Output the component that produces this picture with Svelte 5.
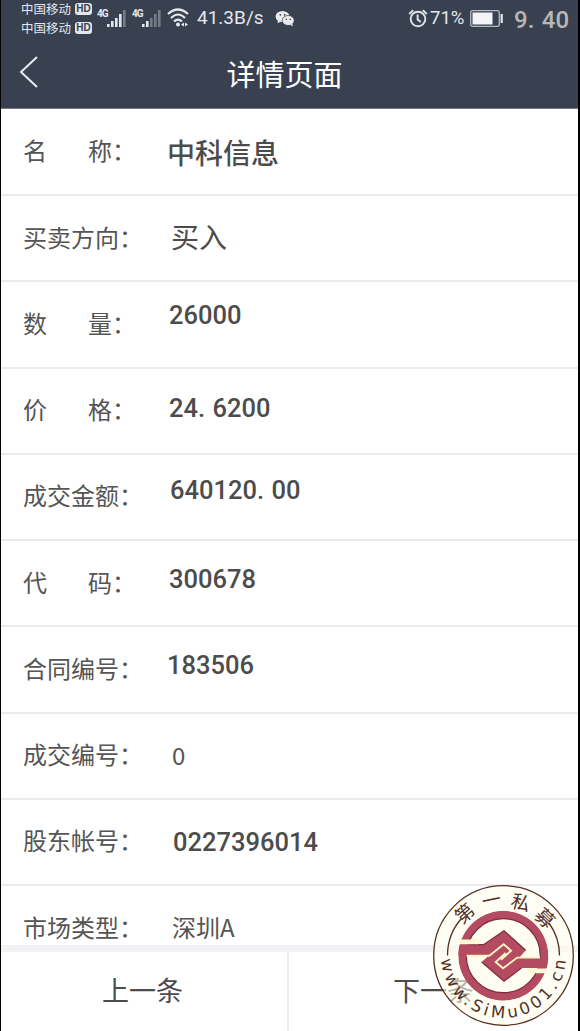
<script lang="ts">
    type Row = {
        label: string;
        value: string;
        kind: string;
        indent: number;
        lift: number;
    };

    // indent and lift place each value inside its own row
    let rows: Row[] = [
        { label: '名称', value: '中科信息', kind: 'name', indent: 166, lift: 0 },
        { label: '买卖方向', value: '买入', kind: 'name light', indent: 170, lift: 2 },
        { label: '数量', value: '26000', kind: 'number', indent: 168, lift: 9 },
        { label: '价格', value: '24.6200', kind: 'number', indent: 168, lift: 3 },
        { label: '成交金额', value: '640120.00', kind: 'number', indent: 169, lift: 7 },
        { label: '代码', value: '300678', kind: 'number', indent: 168, lift: 4 },
        { label: '合同编号', value: '183506', kind: 'number', indent: 166, lift: 4 },
        { label: '成交编号', value: '0', kind: 'plain', indent: 171, lift: 1 },
        { label: '股东帐号', value: '0227396014', kind: 'number', indent: 172, lift: 0 },
        { label: '市场类型', value: '深圳A', kind: 'plain', indent: 171, lift: 2 },
    ];

    let carriers: string[] = ['中国移动', '中国移动'];

    let signals: number[] = [4, 2];
</script>

<div class="screen">
    <header>
        <div class="status">
            <div class="carriers">
                {#each carriers as carrier}
                    <div class="carrier">{carrier}<b>HD</b></div>
                {/each}
            </div>
            {#each signals as level}
                <div class="signal">
                    <span>4G</span>
                    <svg width="20" height="18" viewBox="0 0 20 18">
                        {#each [3, 6, 9, 13, 17] as h, i}
                            <rect
                                x={i * 4}
                                y={18 - h}
                                width="2.6"
                                height={h}
                                fill="#e4e7ee"
                                opacity={i < level ? 1 : 0.35}
                            />
                        {/each}
                    </svg>
                </div>
            {/each}
            <svg class="wifi" width="22" height="19" viewBox="0 0 22 19">
                <g fill="none" stroke="#e4e7ee" stroke-width="2.2">
                    <path d="M1 6Q11-3 21 6" />
                    <path d="M4 10Q11 3 18 10" />
                    <path d="M7 13.5Q11 9.500 15 13.500" />
                </g>
                <circle cx="11" cy="16.500" r="2" fill="#e4e7ee" />
                <path d="M14 16.500l3-2v4zM21 16.500l-3-2v4z" fill="#e4e7ee" />
            </svg>
            <span class="speed">41.3B/s</span>
            <svg class="chat" width="20" height="17" viewBox="0 0 20 17">
                <ellipse cx="7.500" cy="6.500" rx="6.900" ry="5.600" fill="#e8eaee" />
                <path d="M3 9.500l-.5 3.700 3.500-1.700z" fill="#e8eaee" />
                <ellipse cx="13.200" cy="10.500" rx="6" ry="5" fill="#e8eaee" stroke="#394150" stroke-width=".7" />
                <path d="M15 14.500l2.800 2-.5-3z" fill="#e8eaee" />
                <g fill="#394150">
                    <circle cx="5.300" cy="4.800" r=".9" />
                    <circle cx="9.700" cy="4.800" r=".9" />
                    <circle cx="11.300" cy="9.200" r=".8" />
                    <circle cx="15.200" cy="9.200" r=".8" />
                </g>
            </svg>
            <svg class="alarm" width="20" height="19" viewBox="0 0 20 19">
                <g fill="none" stroke="#e0e3ea" stroke-width="1.900">
                    <circle cx="10" cy="10" r="7.300" />
                    <path d="M1.200 5L5.200 1.200M18.800 5l-4-3.800M9.600 5.500v5l3.200 2.600" />
                </g>
            </svg>
            <span class="percent">71%</span>
            <svg class="battery" width="34" height="17" viewBox="0 0 34 17">
                <rect x=".7" y=".7" width="28.600" height="15.600" rx="2" fill="none" stroke="#b4b9c4" stroke-width="1.300" />
                <rect x="2.500" y="2.500" width="20" height="12" fill="#f4f4f6" />
                <rect x="30.600" y="4" width="2.200" height="9" fill="#e4e7ee" />
            </svg>
            <span class="time">9<i>.</i>40</span>
        </div>
        <div class="titlebar">
            <svg class="back" width="20" height="32" viewBox="0 0 20 32">
                <path d="M18 1L2 16l16 15" fill="none" stroke="#e8eaf0" stroke-width="2" />
            </svg>
            <h1>详情页面</h1>
        </div>
    </header>

    <main>
        {#each rows as row}
            <div class="row">
                <div class="label" class:short={row.label.length === 2}>
                    {#if row.label.length === 2}
                        <span>{row.label[0]}</span><span>{row.label[1]}：</span>
                    {:else}
                        {row.label}：
                    {/if}
                </div>
                <div
                    class="value {row.kind}"
                    style={`padding-left: ${row.indent - 150}px; padding-bottom: ${row.lift * 2}px`}
                >
                    {#each row.value.split('.') as part, i}{#if i > 0}<i>.</i>{/if}{part}{/each}
                </div>
            </div>
        {/each}
    </main>

    <nav>
        <button type="button">上一条</button>
        <button type="button">下一条</button>
    </nav>

    <svg class="seal" width="142" height="142" viewBox="0 0 142 142">
        <defs>
            <path id="ring-bottom" d="M8 70.500a62.500 62.500 0 0 0 125 0" />
            <clipPath id="disc">
                <circle cx="70.300" cy="70.700" r="45" />
            </clipPath>
            <clipPath id="hole">
                <circle cx="70.300" cy="70.700" r="36.500" />
            </clipPath>
        </defs>
        <circle cx="70.500" cy="70.500" r="70" fill="#fffdee" opacity=".6" />
        <circle cx="70.500" cy="70.500" r="69.800" fill="none" stroke="#54301f" stroke-width="1.300" />
        <path
            d="M14.500 70.500A56 56 0 0 1 28 34M116 38A56 56 0 0 1 126.500 70.500"
            fill="none"
            stroke="#54301f"
            stroke-width="1.300"
        />
        <g clip-path="url(#disc)">
            <circle cx="70.300" cy="70.700" r="45" fill="#b44b61" />
            <circle cx="70.300" cy="70.700" r="37" fill="#fffdf0" stroke="#7c2c3f" stroke-width="1.200" />
            <path
                d="M25 59.700H50.500L71 45.700 92.700 65.300 86 73H116V83H88.500L71 96.300 48.700 77 56 70.500H25z"
                fill="#b44b61"
            />
            <g clip-path="url(#hole)">
                <path
                    d="M34 59.700H50.500L71 45.700 92.700 65.300M88.500 83L71 96.300 48.700 77"
                    fill="none"
                    stroke="#7c2c3f"
                    stroke-width="1.200"
                />
            </g>
            <path d="M24 54.500H46V59.200H24zM117 83.500H94V88.200H117z" fill="#fff8d5" />
            <path
                d="M33.500 70.800H56.300L70.700 59.300 78 65.700 68 74.700M107 72.600H84.300L70 83.300 62.700 77 72.700 68"
                fill="none"
                stroke="#fff3c4"
                stroke-width="1.900"
            />
        </g>
        <g class="seal-cn">
            <text y="6.500" transform="translate(32 28.500) rotate(-41)">第</text>
            <text y="6.500" transform="translate(58.500 15.500) rotate(-12)">一</text>
            <text y="6.500" transform="translate(87.500 18) rotate(15)">私</text>
            <text y="6.500" transform="translate(111.500 33.500) rotate(44)">募</text>
        </g>
        <text class="seal-url">
            <textPath href="#ring-bottom" startOffset="4" textLength="187">www.SiMu001.cn</textPath>
        </text>
    </svg>
</div>

<style>
    :global(body) {
        margin: 0;
        background: #000;
    }

    .screen {
        position: relative;
        box-sizing: border-box;
        width: 580px;
        height: 1031px;
        padding: 0 2px 0 1px;
        display: flex;
        flex-direction: column;
        overflow: hidden;
        background: #000;
        color: #4c4c4c;
        font-family: 'Noto Sans CJK SC', sans-serif;
    }

    header {
        height: 109px;
        box-sizing: border-box;
        background: #394150;
        border-bottom: 1px solid #777986;
        color: #e4e7ee;
    }

    .status {
        display: flex;
        align-items: center;
        height: 36px;
        padding-left: 20px;
        white-space: nowrap;
    }

    .carriers {
        width: 76px;
    }

    .carrier {
        display: flex;
        align-items: center;
        gap: 4px;
        height: 19px;
        font-size: 12.5px;
        line-height: 19px;
    }

    .carrier b {
        width: 17px;
        height: 12px;
        border-radius: 3px;
        background: #e4e7ee;
        color: #394150;
        font: bold 10px/12px 'Liberation Sans', sans-serif;
        text-align: center;
    }

    .signal {
        display: flex;
        align-items: flex-start;
        width: 35px;
    }

    .signal span {
        width: 10px;
        font: bold 10px/10px Roboto, sans-serif;
        letter-spacing: -1px;
    }

    .wifi {
        margin-top: -2px;
    }

    .speed {
        width: 78px;
        margin-left: 8px;
        font: 19px/36px Roboto, sans-serif;
    }

    .chat {
        margin-right: 113px;
    }

    .percent {
        width: 39px;
        margin-left: 2px;
        font: 18.5px/36px Roboto, sans-serif;
    }

    .alarm,
    .chat,
    .battery,
    .wifi {
        flex: none;
    }

    .battery {
        margin-left: 1px;
    }

    .time {
        margin: 3px 0 0 10px;
        color: #b7b7b9;
        font: 500 24px/36px Roboto, sans-serif;
    }

    i {
        font-style: normal;
        letter-spacing: 7.5px;
    }

    .titlebar {
        display: grid;
        grid-template-columns: 50px 1fr 60px;
        align-items: center;
        height: 72px;
    }

    .back {
        margin-left: 18px;
    }

    h1 {
        margin: 2px 0 0;
        font-size: 29px;
        font-weight: 400;
        line-height: 40px;
        text-align: center;
        color: #fff;
    }

    main {
        flex: 1;
        overflow: hidden;
        background: #fff;
    }

    .row {
        display: flex;
        box-sizing: border-box;
        height: 86.25px;
        border-bottom: 2px solid #ebebed;
    }

    .row:first-child {
        height: 87px;
    }

    .label {
        display: flex;
        align-items: center;
        flex: none;
        box-sizing: border-box;
        width: 150px;
        padding: 0 0 4px 22px;
        color: #555;
        font-size: 24px;
        white-space: nowrap;
    }

    .short span:first-child {
        width: 65px;
    }

    .value {
        display: flex;
        align-items: center;
        white-space: nowrap;
    }

    .name {
        font-size: 28px;
        font-weight: 500;
    }

    .light {
        font-weight: 400;
    }

    .number {
        font: 500 25.5px Roboto, sans-serif;
    }

    .plain {
        color: #555;
        font-size: 24px;
    }

    nav {
        display: flex;
        flex: none;
        height: 86px;
        box-sizing: border-box;
        border-top: 7px solid #f2f2f5;
        background: #fff;
    }

    button {
        box-sizing: border-box;
        width: 289px;
        padding: 0 0 4px;
        border: none;
        background: none;
        color: #4c4c4c;
        font: 27px/40px 'Noto Sans CJK SC', sans-serif;
        cursor: pointer;
    }

    button:first-child {
        width: 288px;
        padding-right: 3px;
        border-right: 2px solid #ebebed;
    }

    .seal {
        position: absolute;
        left: 433px;
        top: 884.5px;
    }

    .seal-cn text {
        font-size: 19px;
        fill: #54301f;
        text-anchor: middle;
    }

    .seal-url {
        font: 16.5px 'DejaVu Sans', sans-serif;
        fill: #54301f;
    }
</style>
